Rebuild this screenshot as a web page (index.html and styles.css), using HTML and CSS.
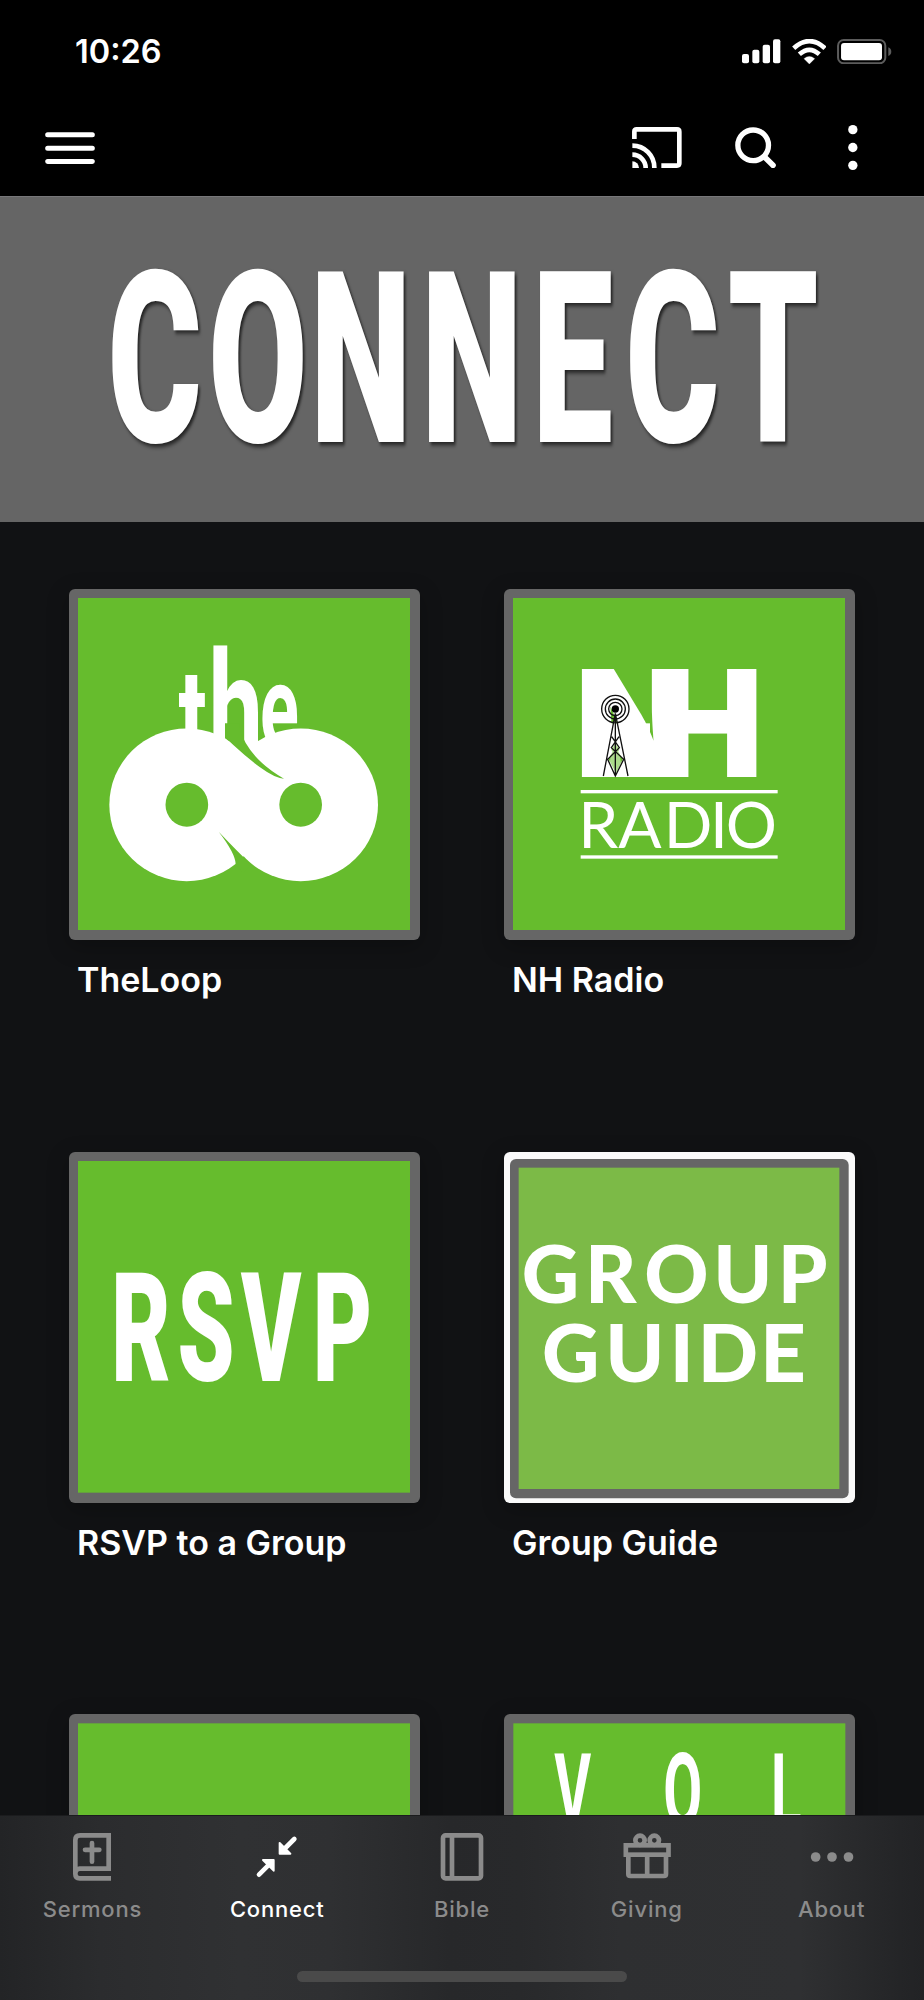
FILE: index.html
```html
<!DOCTYPE html>
<html lang="en">
<head>
<meta charset="utf-8">
<title>Connect</title>
<link rel="stylesheet" href="styles.css">
</head>
<body>
<div class="app">
  <header class="top">
    <div class="status">
      <span class="time">10:26</span>
      <div class="status-icons">
        <svg class="signal" viewBox="843 117 116 74"><g fill="#fff"><rect x="843" y="162" width="21" height="28" rx="6"/><rect x="874" y="149" width="21" height="41" rx="6"/><rect x="905" y="134" width="22" height="56" rx="6"/><rect x="936" y="118" width="22" height="72" rx="6"/></g></svg>
        <svg class="wifi" viewBox="990 115 104 76"><path d="M1042 190l-16-16q16-13 32 0z" fill="#fff" stroke="#fff" stroke-width="1"/><path d="M995 143Q1042 100 1089 143M1012 161Q1042 134 1072 161" fill="none" stroke="#fff" stroke-width="14"/></svg>
        <svg class="battery" viewBox="1127 116 164 76"><rect x="1130" y="119" width="142" height="70" rx="17" fill="none" stroke="#5c5c5c" stroke-width="6"/><rect x="1139" y="128" width="123" height="52" rx="9" fill="#fff"/><path d="M1281 141q9 4 9 13t-9 13z" fill="#5c5c5c"/></svg>
      </div>
    </div>
    <nav class="toolbar">
      <svg class="menu" viewBox="135 394 150 96"><path d="M143 402.500H277M143 442.500H277M143 482.500H277" stroke="#fff" stroke-width="15" stroke-linecap="round"/></svg>
      <div class="actions">
        <svg class="cast" viewBox="511 380 149 124"><g fill="none" stroke="#fff" stroke-width="14"><path d="M518 416V394Q518 387 525 387H646Q653 387 653 394V489Q653 496 646 496H599"/><path d="M512 436A66 66 0 0 1 578 503M512 463A40 40 0 0 1 552 503"/></g><path d="M512 483a20 20 0 0 1 20 20h-20z" fill="#fff"/></svg>
        <svg class="search" viewBox="819 380 123 124"><g fill="none" stroke="#fff"><circle cx="873.500" cy="435" r="46" stroke-width="16"/><path d="M907 469L933 495" stroke-width="17" stroke-linecap="round"/></g></svg>
        <svg class="more" viewBox="1160 375 29 135"><g fill="#fff"><circle cx="1174.500" cy="389" r="14"/><circle cx="1174.500" cy="442.500" r="14"/><circle cx="1174.500" cy="496" r="14"/></g></svg>
      </div>
    </nav>
  </header>

  <section class="banner">
    <svg viewBox="0 197 924 325"><text class="poster banner-title" transform="scale(.6 1)" x="179 347 517 702 887 1042 1213" y="442.300">CONNECT</text></svg>
  </section>

  <main class="grid">
    <article class="card">
      <svg class="art" viewBox="27 27 1053 1053">
        <rect class="frame" x="27" y="27" width="1053" height="1053"/><rect class="green" x="54" y="54" width="996" height="996"/>
        <text class="poster the" transform="scale(.6 1)" x="592 742 1000" y="560 560 510">t<tspan class="the-h">h</tspan><tspan class="the-e">e</tspan></text>
        <g fill="#fff"><ellipse cx="380" cy="674.500" rx="232" ry="229"/><ellipse cx="722" cy="674.500" rx="232" ry="229"/></g>
        <g class="green"><path d="M495 430V475Q508 482 520 495Q560 532 600 562Q645 595 672 596Q565 535 538 445V430z"/><path d="M476 755Q526 820 527 852L549 880L574 854Q530 812 476 755z"/><ellipse cx="380.500" cy="674" rx="64" ry="66"/><ellipse cx="722" cy="674" rx="64" ry="66"/></g>
      </svg>
      <h2>TheLoop</h2>
    </article>
    <article class="card">
      <svg class="art" viewBox="27 27 1053 1053">
        <rect class="frame" x="27" y="27" width="1053" height="1053"/><rect class="green" x="54" y="54" width="996" height="996"/>
        <rect x="265" y="430" width="200" height="161" fill="#fff"/>
        <text class="nh" x="240 472" y="591">NH</text>
        <g class="green"><path d="M361 490l12 19-12 20-12-20zM361 500l22 38-20 42-22-42z"/></g>
        <g fill="none" stroke="#111"><circle cx="361" cy="387" r="41" stroke-width="4"/><circle cx="361" cy="387" r="30" stroke-width="4"/><circle cx="361" cy="387" r="20" stroke-width="4"/></g>
        <circle cx="361" cy="387" r="11"/>
        <path d="M361 405L340 587H382z" fill="#fff" fill-opacity=".45"/>
        <path d="M361 400L325 588M361 400L399 588M361 400V588M350 470L373 503L338 538L361 588L386 538L349 503L372 470" fill="none" stroke="#111" stroke-width="4"/>
        <g fill="#fff"><rect x="257" y="630" width="591" height="10"/><rect x="257" y="826" width="591" height="10"/></g>
        <text class="radio" x="250 370 506 645 692" y="803">RADIO</text>
      </svg>
      <h2>NH Radio</h2>
    </article>
    <article class="card">
      <svg class="art" viewBox="27 35 1053 1053">
        <rect class="frame" x="27" y="35" width="1053" height="1053"/><rect class="green" x="54" y="62" width="996" height="995"/>
        <text class="poster rsvp" transform="scale(.6 1)" x="256 588 905 1264" y="721">RSVP</text>
      </svg>
      <h2>RSVP to a Group</h2>
    </article>
    <article class="card">
      <svg class="art" viewBox="27 35 1053 1053">
        <rect x="27" y="35" width="1053" height="1053" fill="#fafafa"/><rect class="frame" x="45" y="56" width="1016" height="1018" rx="18"/><rect class="olive" x="71" y="82" width="962" height="964"/>
        <text class="guide" x="80 270 448 655 848" y="488">GROUP</text>
        <text class="guide" x="141 331 524 608 796" y="726">GUIDE</text>
      </svg>
      <h2>Group Guide</h2>
    </article>
    <article class="card">
      <svg class="art" viewBox="207 41 1053 1053"><rect class="frame" x="207" y="41" width="1053" height="1053"/><rect class="green" x="234" y="69" width="996" height="996"/></svg>
    </article>
    <article class="card">
      <svg class="art" viewBox="126 41 1053 1053">
        <rect class="frame" x="126" y="41" width="1053" height="1053"/><rect class="green" x="154" y="69" width="996" height="996"/>
        <text class="poster vol" transform="scale(.55 1)" x="503 1098 1686" y="378">VOL</text>
      </svg>
    </article>
  </main>

  <footer class="tabbar">
    <div class="tabs">
      <a class="tab">
        <svg class="icon" viewBox="207 399 144 144"><g fill="none" stroke="currentColor" stroke-width="14"><path d="M336 535H242Q229 535 229 522V420Q229 406 243 406H329V506H242Q229 507 229 522"/><path d="M279 429V485M258 449.500H301" stroke-linecap="round"/></g></svg>
        <span>Sermons</span>
      </a>
      <a class="tab active">
        <svg class="icon" viewBox="760 396 144 144"><g fill="currentColor" stroke="currentColor" stroke-linejoin="round"><path d="M778 521L808 491M884 414L854 444" stroke-width="14" stroke-linecap="round"/><path d="M790 477H822V509zM840 426V458H872z" stroke-width="6"/></g></svg>
        <span>Connect</span>
      </a>
      <a class="tab">
        <svg class="icon" viewBox="1319 399 144 144"><g fill="none" stroke="currentColor" stroke-width="14"><rect x="1334" y="406" width="114" height="129" rx="8"/><path d="M1361 406V535"/></g></svg>
        <span>Bible</span>
      </a>
      <a class="tab">
        <svg class="icon" viewBox="479 399 144 144"><g fill="none" stroke="currentColor" stroke-width="14"><rect x="487.500" y="436" width="128" height="28"/><path d="M495 464V522Q495 528 501 528H602Q608 528 608 522V464M551.500 464V528"/><circle cx="530" cy="421" r="14"/><circle cx="573" cy="421" r="14"/></g></svg>
        <span>Giving</span>
      </a>
      <a class="tab">
        <svg class="icon" viewBox="1037 399 144 144"><g fill="currentColor"><circle cx="1060" cy="471" r="14.500"/><circle cx="1109" cy="471" r="14.500"/><circle cx="1158.500" cy="471" r="14.500"/></g></svg>
        <span>About</span>
      </a>
    </div>
    <div class="home"></div>
  </footer>
</div>
</body>
</html>
```

FILE: styles.css
```css
* { box-sizing: border-box; }
body { margin: 0; background: #111214; color: #fff; font-family: Inter, "Liberation Sans", sans-serif; }
svg { display: block; flex: none; }
h2 { margin: 0; }

.app { width: 924px; height: 2000px; display: flex; flex-direction: column; overflow: hidden; }

.top { background: #000; height: 196px; flex: none; }
.status { height: 103px; padding: 0 32px 0 75px; display: flex; align-items: center; justify-content: space-between; }
.time { font-size: 32.500px; font-weight: 600; line-height: 40px; letter-spacing: 0; }
.status-icons { display: flex; align-items: center; gap: 11px; }
.signal { width: 38.700px; height: 24.700px; }
.wifi { width: 34.700px; height: 25.300px; }
.battery { width: 54.700px; height: 25.300px; }

.toolbar { height: 89px; padding: 0 66px 0 45px; display: flex; align-items: center; justify-content: space-between; }
.menu { width: 50px; height: 32px; }
.actions { display: flex; align-items: center; }
.cast { width: 49.700px; height: 41.300px; margin-right: 53px; }
.search { width: 41px; height: 41.300px; margin-right: 72.700px; }
.more { width: 9.700px; height: 45px; }

.banner { height: 326px; flex: none; background: #656565; border-top: 1px solid #77777a; }
.banner svg { width: 924px; height: 325px; }
.poster { font-family: Roboto, "Liberation Sans", sans-serif; font-weight: 900; fill: #fff; }
.banner-title { font-size: 240px; filter: drop-shadow(3px 3px 2px rgba(0, 0, 0, .65)); }

.grid { flex: 1; min-height: 0; overflow: hidden; padding: 67px 69px 0; display: grid; grid-template-columns: 351px 351px; column-gap: 84px; grid-auto-rows: 562.500px; align-content: start; }
.art { width: 351px; height: 351px; border-radius: 6px; box-shadow: 0 6px 22px rgba(0, 0, 0, .25); }
.card h2 { font-size: 34px; font-weight: 600; line-height: 42px; padding: 19px 0 0 8px; letter-spacing: 0; white-space: nowrap; }

.frame { fill: #666; }
.green { fill: #66bc2d; }
.olive { fill: #7cba47; }
.the { font-size: 420px; font-weight: 700; }
.the-h { font-size: 487px; }
.the-e { font-size: 360px; }
.nh { font-family: Inter, sans-serif; font-weight: 900; font-size: 444px; fill: #fff; }
.radio { font-family: Lato, sans-serif; font-size: 192px; fill: #fff; }
.rsvp { font-size: 456px; }
.guide { font-family: Lato, sans-serif; font-weight: 900; font-size: 238px; fill: #fff; }
.vol { font-size: 308px; font-weight: 700; }

.tabbar { height: 185px; flex: none; display: flex; flex-direction: column; align-items: center; justify-content: space-between; padding-bottom: 18px; border-top: 1px solid #1b1c1e; background: linear-gradient(90deg, #232426 0, #2b2c2e 100px, #303133 240px, #2f3032 330px, #27282a 450px, #28292b 520px, #2e2f31 620px, #2f3032 800px, #242527 900px, #222325 924px); }
.tabs { width: 100%; display: grid; grid-template-columns: repeat(5, 1fr); padding-top: 17px; }
.tab { display: flex; flex-direction: column; align-items: center; gap: 14px; color: #8b8b8b; font-size: 22px; font-weight: 500; line-height: 28px; letter-spacing: .8px; }
.tab.active { color: #fff; }
.icon { width: 48px; height: 48px; }
.home { width: 330px; height: 11px; border-radius: 6px; background: #4a4a4a; }
```
